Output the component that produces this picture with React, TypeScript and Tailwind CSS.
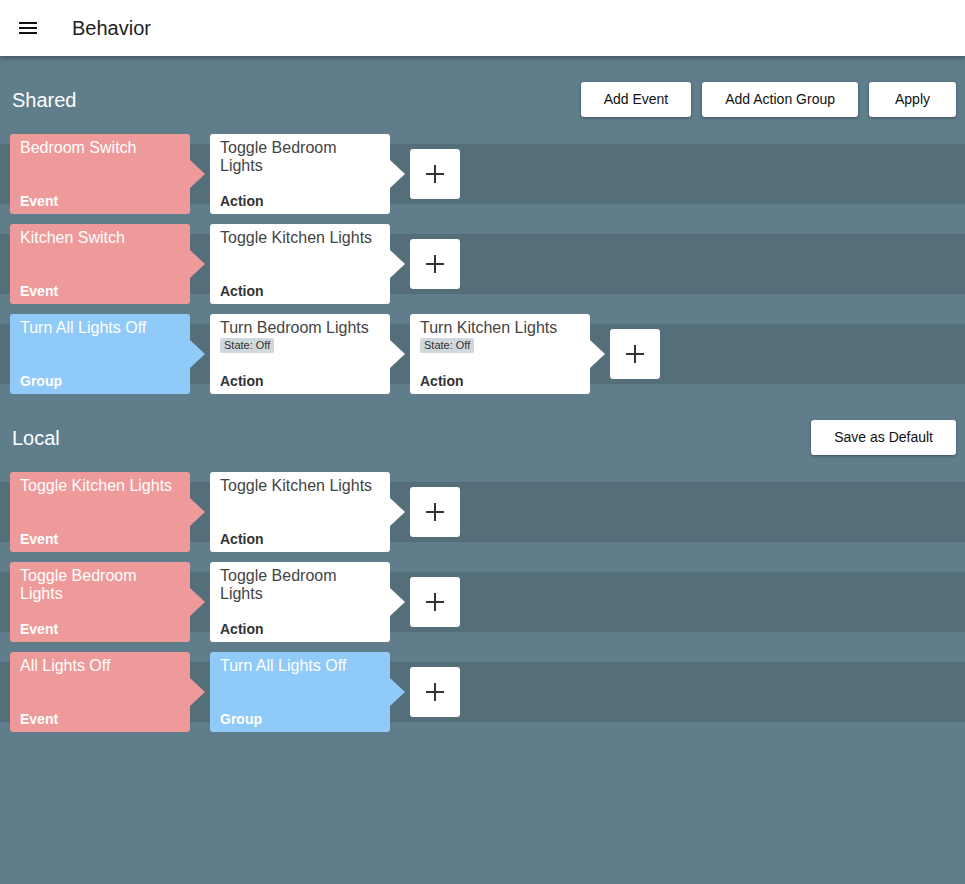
import React from "react";

type Kind = "event" | "action" | "group";
type Item = { title: string; kind: Kind; chip?: string };

const bgOf: Record<Kind, string> = {
  event: "bg-[#ef9a9a] text-white",
  action: "bg-white text-[#444]",
  group: "bg-[#90caf9] text-white",
};
const fillOf: Record<Kind, string> = {
  event: "#ef9a9a",
  action: "#ffffff",
  group: "#90caf9",
};
const labelOf: Record<Kind, string> = {
  event: "Event",
  action: "Action",
  group: "Group",
};

function Card({ item, arrow }: { item: Item; arrow: boolean }) {
  return (
    <div
      className={`relative flex h-[80px] w-[180px] shrink-0 flex-col justify-between rounded-[3px] px-[10px] pt-[5px] pb-[5px] ${bgOf[item.kind]}`}
    >
      <div>
        <div className="text-[16px] leading-[18px]">{item.title}</div>
        {item.chip && (
          <div className="mt-[1px] w-fit rounded-[2px] bg-[#cfd8dc] px-[4px] text-[11px] leading-[15px] text-[#333]">
            {item.chip}
          </div>
        )}
      </div>
      <div
        className={`text-[14px] font-bold leading-[16px] ${
          item.kind === "action" ? "text-[#333]" : "text-white"
        }`}
      >
        {labelOf[item.kind]}
      </div>
      {arrow && (
        <svg
          className="absolute right-[-15px] top-[26px]"
          width="15"
          height="28"
          viewBox="0 0 15 28"
        >
          <polygon points="0,0 15,14 0,28" fill={fillOf[item.kind]} />
        </svg>
      )}
    </div>
  );
}

function PlusButton() {
  return (
    <div className="flex h-[50px] w-[50px] shrink-0 items-center justify-center rounded-[3px] bg-white">
      <svg width="20" height="20" viewBox="0 0 20 20">
        <path d="M10 1v18M1 10h18" stroke="#333" strokeWidth="2" />
      </svg>
    </div>
  );
}

function Row({ items }: { items: Item[] }) {
  return (
    <div className="flex h-[80px] items-center gap-5 bg-[linear-gradient(to_bottom,transparent_10px,#546e7a_10px,#546e7a_70px,transparent_70px)] pl-[10px]">
      {items.map((it, i) => (
        <Card key={i} item={it} arrow />
      ))}
      <PlusButton />
    </div>
  );
}

function Btn({ children }: { children: React.ReactNode }) {
  return (
    <button className="h-[35px] min-w-[87px] rounded-[3px] bg-white px-[23px] text-[14px] leading-[35px] text-[#111] shadow-[0_1px_3px_rgba(0,0,0,0.35)]">
      {children}
    </button>
  );
}

function Section({
  title,
  buttons,
  rows,
}: {
  title: string;
  buttons: string[];
  rows: Item[][];
}) {
  return (
    <div className="pt-[26px]">
      <div className="mb-[17px] flex h-[35px] items-center justify-between pl-3 pr-[9px]">
        <div className="text-[20px] text-white">{title}</div>
        <div className="flex gap-[11px]">
          {buttons.map((b) => (
            <Btn key={b}>{b}</Btn>
          ))}
        </div>
      </div>
      <div className="flex flex-col gap-[10px]">
        {rows.map((r, i) => (
          <Row key={i} items={r} />
        ))}
      </div>
    </div>
  );
}

export default function App() {
  const shared: Item[][] = [
    [
      { title: "Bedroom Switch", kind: "event" },
      { title: "Toggle Bedroom Lights", kind: "action" },
    ],
    [
      { title: "Kitchen Switch", kind: "event" },
      { title: "Toggle Kitchen Lights", kind: "action" },
    ],
    [
      { title: "Turn All Lights Off", kind: "group" },
      { title: "Turn Bedroom Lights", kind: "action", chip: "State: Off" },
      { title: "Turn Kitchen Lights", kind: "action", chip: "State: Off" },
    ],
  ];
  const local: Item[][] = [
    [
      { title: "Toggle Kitchen Lights", kind: "event" },
      { title: "Toggle Kitchen Lights", kind: "action" },
    ],
    [
      { title: "Toggle Bedroom Lights", kind: "event" },
      { title: "Toggle Bedroom Lights", kind: "action" },
    ],
    [
      { title: "All Lights Off", kind: "event" },
      { title: "Turn All Lights Off", kind: "group" },
    ],
  ];
  return (
    <div className="min-h-screen bg-[#607d8b] font-['Liberation_Sans',Arial,sans-serif]">
      <div className="relative z-10 flex h-[56px] items-center bg-white shadow-[0_2px_5px_rgba(0,0,0,0.35)]">
        <div className="ml-[19px] flex w-[18px] flex-col gap-[3px]">
          <span className="block h-[2px] bg-[#111]" />
          <span className="block h-[2px] bg-[#111]" />
          <span className="block h-[2px] bg-[#111]" />
        </div>
        <div className="ml-[35px] text-[20px] text-[#222]">Behavior</div>
      </div>
      <Section
        title="Shared"
        buttons={["Add Event", "Add Action Group", "Apply"]}
        rows={shared}
      />
      <Section title="Local" buttons={["Save as Default"]} rows={local} />
    </div>
  );
}
